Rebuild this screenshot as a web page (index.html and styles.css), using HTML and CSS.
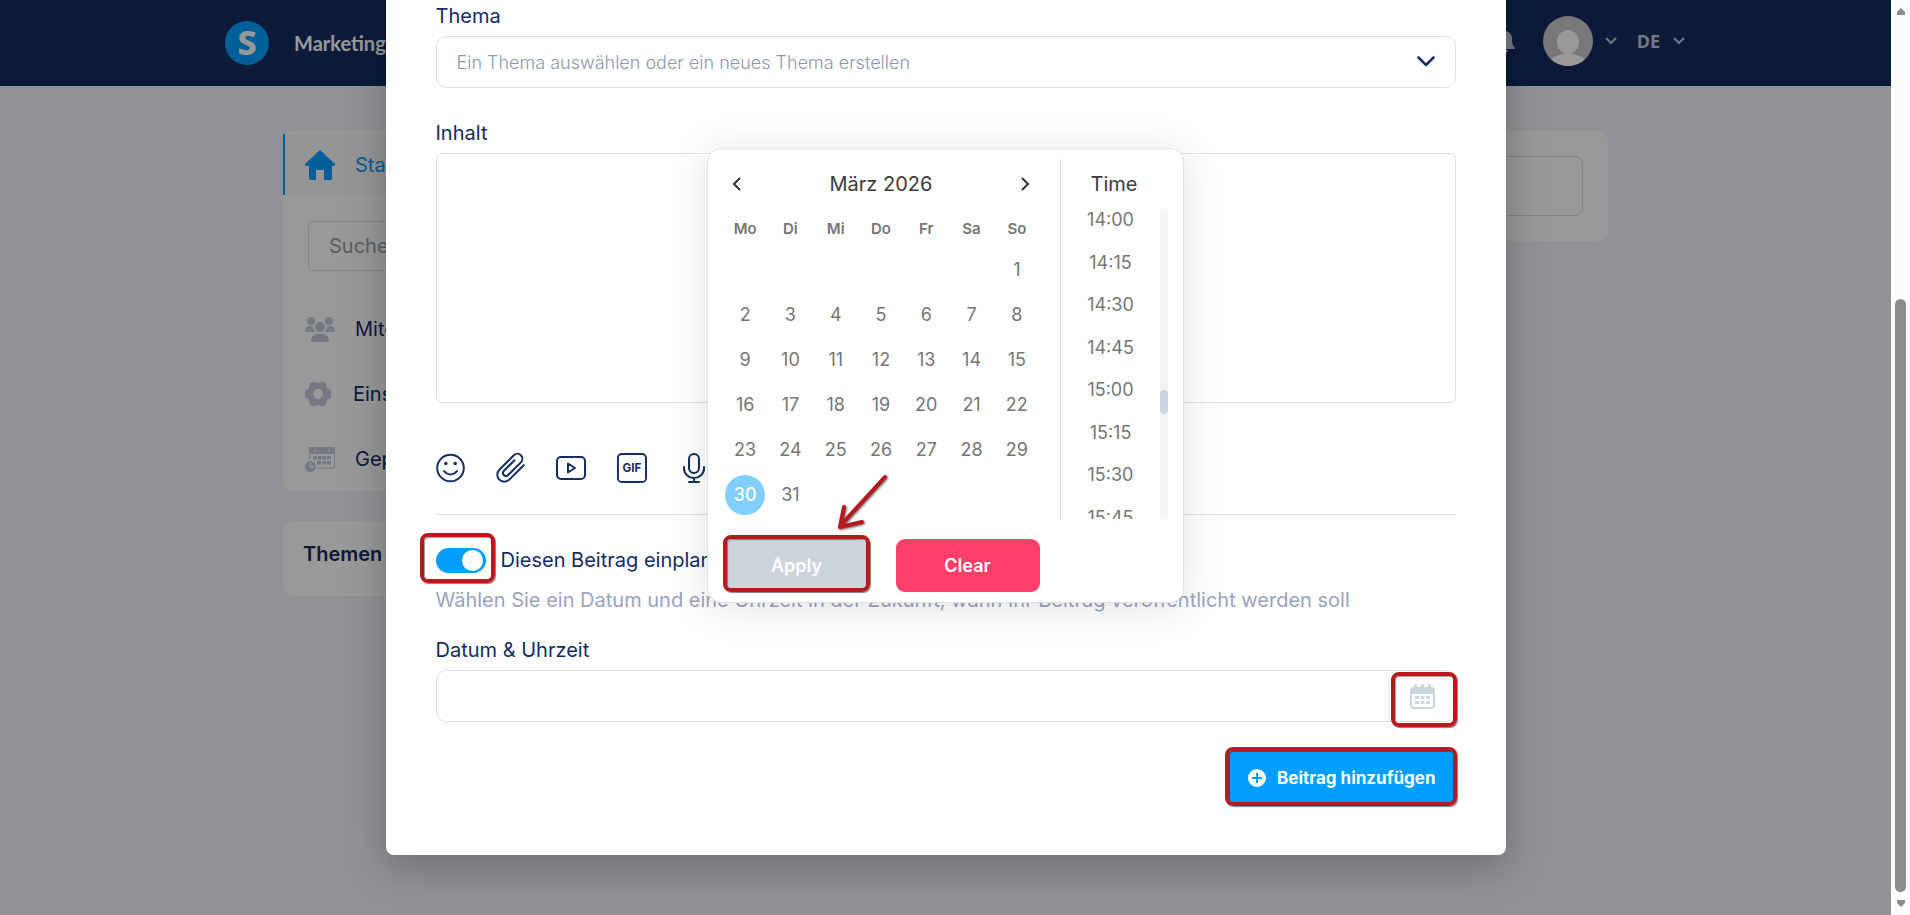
FILE: index.html
```html
<!DOCTYPE html>
<html lang="de">
<head>
  <meta charset="UTF-8" />
  <meta name="viewport" content="width=device-width, initial-scale=1" />
  <title>Beitrag erstellen</title>
  <link rel="stylesheet" href="styles.css">
</head>
<body>

<div class="page">
  <header class="header">
    <div class="logo">S</div>
    <nav class="nav"><a href="#">Marketing</a></nav>
    <div class="header-right">
      <svg class="bell" viewBox="0 0 24 26"><path d="M12 1a2 2 0 0 0-2 2C6 4 4 7 4 11c0 5-1 7-3 9v1h22v-1c-2-2-3-4-3-9 0-4-2-7-6-8a2 2 0 0 0-2-2zM8 22a4 3 0 0 0 8 0z"/></svg>
      <svg class="avatar" viewBox="0 0 50 50">
        <clipPath id="circle"><circle cx="25" cy="25" r="25"/></clipPath>
        <g clip-path="url(#circle)">
          <rect width="50" height="50" fill="#c9c9c9"/>
          <path d="M25 14c-7 0-11 6-11 12 0 5 3 9 7 11v1C14 39 9 41 7 46l4 6h28l4-6c-2-5-7-7-14-8v-1c4-2 7-6 7-11 0-6-4-12-11-12z" fill="#fff"/>
        </g>
      </svg>
      <svg class="caret" viewBox="0 0 12 8"><path d="M1 1l5 5 5-5"/></svg>
      <span class="lang">DE</span>
      <svg class="caret" viewBox="0 0 12 8"><path d="M1 1l5 5 5-5"/></svg>
    </div>
  </header>

  <main class="container">
    <aside class="sidebar">
      <div class="card menu">
        <a class="menu-item active" href="#">
          <svg viewBox="0 0 30 30"><path d="M15 0L29.500 13.500c1 1 .3 2.500-1 2.500H27v12a2 2 0 0 1-2 2h-6v-9a1 1 0 0 0-1-1h-6a1 1 0 0 0-1 1v9H6a2 2 0 0 1-2-2V16H1.500C.2 16-.5 14.500.5 13.500z"/></svg>
          <span>Startseite</span>
        </a>
        <input class="search" type="text" placeholder="Suche" aria-label="Suche">
        <a class="menu-item" href="#">
          <svg viewBox="0 0 30 30"><circle cx="6" cy="7" r="4"/><circle cx="24" cy="7" r="4"/><circle cx="15" cy="13" r="5"/><path d="M0 18c0-4 2-6 5-6h3c0 3 1 5 2 6zM30 18c0-4-2-6-5-6h-3c0 3-1 5-2 6zM6 28c0-5 3-8 6-8h6c3 0 6 3 6 8z"/></svg>
          <span>Mitglieder</span>
        </a>
        <a class="menu-item settings" href="#">
          <svg viewBox="0 0 28 30"><path fill-rule="evenodd" d="M9 2.500c1 0 2.500 1.500 4 1.500s3-1.500 4-1.500l4 2c1 1 0 3 1 4.500s3.500 1.500 4 3v6c-.5 1.500-3 1.500-4 3s0 3.500-1 4.500l-4 2c-1 0-2.500-1.500-4-1.500s-3 1.500-4 1.500l-4-2c-1-1 0-3-1-4.500s-3.500-1.500-4-3v-6c.5-1.500 3-1.500 4-3s0-3.500 1-4.500zM13 10a5 5 0 1 0 0 10 5 5 0 0 0 0-10z"/></svg>
          <span>Einstellungen</span>
        </a>
        <a class="menu-item" href="#">
          <svg viewBox="0 0 30 30"><path fill-rule="evenodd" d="M4 3h26v7H4zM10 5.500a1 1 0 1 0 0 2 1 1 0 0 0 0-2zM24 5.500a1 1 0 1 0 0 2 1 1 0 0 0 0-2z"/><path d="M4.500 10v5M29.500 10v14H12" fill="none" stroke="#c1c8da"/><path d="M8 12h4v3.500H8zM13 12h3.500v3.500H13zM17.500 12H21v3.500h-3.500zM22 12h4v3.500h-4zM12 17h4v3.500h-4zM17.500 17H21v3.500h-3.500zM22 17h4v3.500h-4z"/><circle cx="5.500" cy="22.500" r="5.500"/><path d="M5.500 19v4h3" fill="none" stroke="#fff" stroke-width="1.500"/></svg>
          <span>Geplante Beiträge</span>
        </a>
      </div>
      <div class="card topics">Themen</div>
    </aside>
    <section class="card feed">
      <input class="feed-input" type="text" aria-label="Neuer Beitrag">
    </section>
  </main>

  <div class="overlay">
    <form class="modal" autocomplete="off">
      <label for="thema">Thema</label>
      <div class="field">
        <select id="thema">
          <option>Ein Thema auswählen oder ein neues Thema erstellen</option>
        </select>
        <svg class="select-arrow" viewBox="0 0 18 12"><path d="M1.500 1.500L9 9l7.500-7.500"/></svg>
      </div>

      <label for="inhalt">Inhalt</label>
      <textarea id="inhalt"></textarea>

      <div class="toolbar">
        <button type="button" aria-label="Emoji"><svg viewBox="0 0 30 30"><circle cx="14.500" cy="15" r="13.300"/><circle class="dot" cx="9.800" cy="10.500" r="1.800"/><circle class="dot" cx="19.200" cy="10.500" r="1.800"/><path d="M8 18c3.500 4.500 9.500 4.500 13 0"/></svg></button>
        <button type="button" aria-label="Anhang"><svg viewBox="0 0 30 30"><path transform="rotate(45 15 15)" d="M22 4v20.500a7 7 0 0 1-14 0V4a5 5 0 0 1 10 0v18a3 3 0 0 1-6 0V7"/></svg></button>
        <button type="button" aria-label="Video"><svg viewBox="0 0 30 30"><rect x="1" y="4" width="28" height="22" rx="4"/><path d="M12 10.500v9l7-4.500z"/></svg></button>
        <button type="button" aria-label="GIF"><svg viewBox="-1 0 31 31"><rect x="1" y="1" width="29" height="29" rx="4"/><text x="15.500" y="20">GIF</text></svg></button>
        <button type="button" aria-label="Sprachnachricht"><svg viewBox="-4 0 30 30"><rect x="9" y="1" width="10" height="19" rx="5"/><path d="M4 14v1.500a10 9.500 0 0 0 20 0V14M14 25v4M9 29h10"/></svg></button>
      </div>

      <div class="schedule">
        <span class="marked mark-toggle"><input class="toggle" type="checkbox" id="einplanen" checked></span>
        <label for="einplanen">Diesen Beitrag einplanen</label>
      </div>
      <p class="hint">Wählen Sie ein Datum und eine Uhrzeit in der Zukunft, wann Ihr Beitrag veröffentlicht werden soll</p>

      <label for="datum">Datum &amp; Uhrzeit</label>
      <div class="field date-field">
        <input type="text" id="datum">
        <button type="button" class="marked mark-date" aria-label="Kalender öffnen">
          <svg viewBox="0 0 25 25"><path d="M4 1.500a1.500 1.500 0 0 1 3 0V3h4V1.500a1.500 1.500 0 0 1 3 0V3h4V1.500a1.500 1.500 0 0 1 3 0V3a4 4 0 0 1 4 4v14a4 4 0 0 1-4 4H4a4 4 0 0 1-4-4V7a4 4 0 0 1 4-4zM2 10v11a2 2 0 0 0 2 2h17a2 2 0 0 0 2-2V10z" fill-rule="evenodd"/><path d="M5 12h4v3H5zM10.500 12h4v3h-4zM16 12h4v3h-4zM5 17h4v3H5zM10.500 17h4v3h-4zM16 17h4v3h-4z"/></svg>
        </button>
      </div>

      <div class="actions">
        <button type="submit" class="btn-submit marked mark-submit">
          <svg viewBox="0 0 20 20"><circle cx="10" cy="10" r="10" fill="#fff"/><path d="M10 5v10M5 10h10"/></svg>
          Beitrag hinzufügen
        </button>
      </div>

      <div class="picker">
        <div class="picker-main">
          <div class="calendar">
            <div class="month">
              <button type="button" aria-label="Vorheriger Monat"><svg viewBox="0 0 10 16"><path d="M8 2L2 8l6 6"/></svg></button>
              <span>März 2026</span>
              <button type="button" aria-label="Nächster Monat"><svg viewBox="0 0 10 16"><path d="M2 2l6 6-6 6"/></svg></button>
            </div>
            <table>
              <thead>
                <tr><th>Mo</th><th>Di</th><th>Mi</th><th>Do</th><th>Fr</th><th>Sa</th><th>So</th></tr>
              </thead>
              <tbody>
                <tr><td></td><td></td><td></td><td></td><td></td><td></td><td>1</td></tr>
                <tr><td>2</td><td>3</td><td>4</td><td>5</td><td>6</td><td>7</td><td>8</td></tr>
                <tr><td>9</td><td>10</td><td>11</td><td>12</td><td>13</td><td>14</td><td>15</td></tr>
                <tr><td>16</td><td>17</td><td>18</td><td>19</td><td>20</td><td>21</td><td>22</td></tr>
                <tr><td>23</td><td>24</td><td>25</td><td>26</td><td>27</td><td>28</td><td>29</td></tr>
                <tr><td><span class="selected">30</span></td><td>31</td><td></td><td></td><td></td><td></td><td></td></tr>
              </tbody>
            </table>
          </div>
          <div class="time">
            <div class="time-title">Time</div>
            <div class="time-body">
              <ul>
                <li>14:00</li><li>14:15</li><li>14:30</li><li>14:45</li>
                <li>15:00</li><li>15:15</li><li>15:30</li><li>15:45</li>
              </ul>
              <div class="time-track"><div class="time-thumb"></div></div>
            </div>
          </div>
        </div>
        <div class="picker-buttons">
          <button type="button" class="btn-apply marked mark-apply">Apply</button>
          <button type="button" class="btn-clear">Clear</button>
        </div>
        <svg class="arrow" viewBox="0 0 56 60"><path d="M51 6L6 55M10 36L6 56l22-5"/></svg>
      </div>
    </form>
  </div>
</div>

<div class="scrollbar">
  <svg viewBox="0 0 10 7"><path d="M5 0l4 4v3H1V4z"/></svg>
  <div class="scroll-thumb"></div>
  <svg viewBox="0 0 10 7"><path d="M1 0h8v3L5 7 1 3z"/></svg>
</div>

</body>
</html>
```
FILE: styles.css
```css
* {
  box-sizing: border-box;
}
body {
  margin: 0;
  display: flex;
  min-height: 100vh;
  font-family: Inter, sans-serif;
  font-size: 20px;
  line-height: 24px;
  color: #142c62;
}
button, input, select, textarea {
  font-family: inherit;
  margin: 0;
}
button {
  border: none;
  background: none;
  padding: 0;
  cursor: pointer;
}
a {
  color: inherit;
  text-decoration: none;
}
svg {
  display: block;
  flex: none;
}
.page {
  position: relative;
  flex: 1;
  min-width: 0;
  background: #f2f4f9;
  overflow: hidden;
}

/* Header */
.header {
  display: flex;
  align-items: center;
  height: 86px;
  padding: 0 206px 0 225px;
  background: #142c62;
  color: #fff;
}
.logo {
  width: 44px;
  height: 44px;
  border-radius: 50%;
  background: #009eff;
  font-family: "Noto Sans", sans-serif;
  font-size: 34px;
  font-weight: 800;
  line-height: 42px;
  text-align: center;
}
.nav {
  margin-left: 25px;
  font-family: Lato, sans-serif;
  font-weight: bold;
}
.header-right {
  display: flex;
  align-items: center;
  margin-left: auto;
  padding-bottom: 4px;
}
.bell {
  width: 24px;
  height: 26px;
  margin-right: 27px;
  fill: #c1c8da;
}
.avatar {
  width: 50px;
  height: 50px;
  margin-right: 12px;
}
.caret {
  width: 12px;
  height: 8px;
  fill: none;
  stroke: #c1c8da;
  stroke-width: 2;
}
.lang {
  margin: 0 13px 0 20px;
  font-family: "Noto Sans", sans-serif;
  font-size: 18px;
  font-weight: 700;
  color: #c1c8da;
}

/* Inhalt hinter dem Dialog */
.container {
  display: flex;
  justify-content: space-between;
  align-items: flex-start;
  max-width: 1325px;
  margin: 45px auto 0;
}
.card {
  background: #fff;
  border-radius: 10px;
}
.sidebar {
  width: 320px;
}
.menu {
  padding-top: 3px;
}
.menu-item {
  display: flex;
  align-items: center;
  gap: 20px;
  height: 65px;
  padding-left: 22px;
}
.menu-item svg {
  width: 30px;
  height: 30px;
  fill: #c1c8da;
}
.menu-item.active {
  height: 61px;
  padding-left: 20px;
  border-left: 2px solid #009eff;
  background: #f8f9fb;
  color: #009eff;
}
.menu-item.active svg {
  fill: #009eff;
}
.menu-item.settings svg {
  width: 28px;
}
.search {
  display: block;
  width: 270px;
  height: 50px;
  margin: 26px 25px 25px;
  padding: 0 20px;
  border: 1px solid #dcdcdc;
  border-radius: 6px;
  font-size: 20px;
}
.search::placeholder {
  color: #999;
}
.topics {
  margin-top: 30px;
  padding: 21px 20px 30px;
  font-weight: 600;
}
.feed {
  width: 975px;
  padding: 25px;
}
.feed-input {
  display: block;
  width: 100%;
  height: 60px;
  border: 1px solid #dcdcdc;
  border-radius: 8px;
}

/* Dialog */
.overlay {
  position: absolute;
  inset: 0;
  background: rgba(0, 0, 0, 0.4);
}
.modal {
  position: relative;
  max-width: 1120px;
  margin: 0 auto;
  padding: 4px 50px 52px;
  background: #fff;
  border-radius: 0 0 8px 8px;
  box-shadow: 0 12px 40px rgba(0, 0, 0, 0.25);
}
.modal > label {
  display: block;
  margin-bottom: 8px;
}
.field {
  position: relative;
  margin-bottom: 33px;
}
select, textarea, .date-field input {
  display: block;
  width: 100%;
  height: 52px;
  border: 1px solid #dfe0e4;
  border-radius: 10px;
  background: #fff;
}
select {
  appearance: none;
  padding: 0 20px;
  font-size: 18px;
  font-weight: 300;
  color: #8e98aa;
}
.select-arrow {
  position: absolute;
  right: 21px;
  top: 20px;
  width: 18px;
  height: 12px;
  fill: none;
  stroke: #142c62;
  stroke-width: 2.5;
  stroke-linecap: round;
  stroke-linejoin: round;
  pointer-events: none;
}
textarea {
  height: 250px;
  border-radius: 6px;
  resize: none;
}
.toolbar {
  display: flex;
  gap: 30px;
  margin-top: 50px;
  padding-bottom: 31px;
  border-bottom: 1px solid #dfe0e4;
}
.toolbar svg {
  width: 30px;
  height: 30px;
  overflow: visible;
  fill: none;
  stroke: #142c62;
  stroke-width: 2;
  stroke-linecap: round;
  stroke-linejoin: round;
}
.toolbar .dot {
  fill: #142c62;
  stroke: none;
}
.toolbar text {
  fill: #142c62;
  stroke: none;
  font-size: 12px;
  font-weight: 700;
  text-anchor: middle;
}
.schedule {
  display: flex;
  align-items: flex-start;
  gap: 15px;
  margin-top: 33px;
}
.toggle {
  appearance: none;
  display: block;
  width: 50px;
  height: 25px;
  padding: 2px 3px;
  border-radius: 13px;
  background: #009eff;
}
.toggle::before {
  content: "";
  display: block;
  width: 21px;
  height: 21px;
  margin-left: auto;
  border-radius: 50%;
  background: #fff;
}
.hint {
  margin: 15px 0 26px;
  color: #9aa3bd;
}
.date-field {
  margin-bottom: 28px;
}
.date-field button {
  position: absolute;
  right: 0;
  top: 0;
  width: 62px;
  height: 52px;
  padding-left: 16px;
}
.date-field svg {
  width: 25px;
  height: 25px;
  fill: #cbd5e1;
}
.actions {
  display: flex;
  justify-content: flex-end;
}
.btn-submit {
  display: flex;
  align-items: center;
  gap: 10px;
  height: 53px;
  padding: 3px 20px 0;
  border-radius: 8px;
  background: #009eff;
  color: #fff;
  font-size: 17px;
  font-weight: 700;
}
.btn-submit svg {
  width: 20px;
  height: 20px;
  fill: none;
  stroke: #009eff;
  stroke-width: 2;
}

/* Rote Markierungen */
.marked {
  position: relative;
}
.marked::after {
  content: "";
  position: absolute;
  inset: -3px -1px -3px -2px;
  border: 4px solid #b71a1c;
  border-radius: 8px;
  box-shadow: 1px 1px 1px rgba(0, 0, 0, 0.5), inset 1px 1px 1px rgba(0, 0, 0, 0.4);
  pointer-events: none;
}
.mark-toggle::after {
  inset: -15px -9px -10px -16px;
}
.date-field .marked {
  position: absolute;
}
.mark-date::after {
  inset: 2px -1px -5px -3px;
}
.mark-apply::after {
  inset: -4px -1px 0 -2px;
}

/* Datumsauswahl */
.picker {
  position: absolute;
  left: 321px;
  top: 148px;
  width: 477px;
  padding: 10px 15px;
  border: 1px solid #dfe0e4;
  border-radius: 14px;
  background: #fff;
  box-shadow: 0 4px 40px rgba(0, 0, 0, 0.12);
  color: #757575;
}
.picker-main {
  display: flex;
  height: 360px;
}
.calendar {
  width: 338px;
  padding-right: 20px;
  border-right: 1px solid #dfe0e4;
}
.month {
  display: flex;
  justify-content: space-between;
  align-items: center;
  height: 50px;
  padding: 0 9px;
  color: #3c3c3c;
}
.month svg {
  width: 10px;
  height: 16px;
  fill: none;
  stroke: #333;
  stroke-width: 2;
}
table {
  width: 100%;
  table-layout: fixed;
  border-collapse: collapse;
  font-size: 18px;
  text-align: center;
}
th {
  height: 38px;
  padding: 2px 0 0;
  font-size: 15px;
  font-weight: 600;
}
td {
  height: 45px;
  padding: 0;
}
.selected {
  display: block;
  width: 40px;
  margin: 0 auto;
  border-radius: 50%;
  background: #80cfff;
  color: #fff;
  font-weight: 500;
  line-height: 40px;
}
.time {
  display: flex;
  flex-direction: column;
  flex: 1;
}
.time-title {
  height: 50px;
  line-height: 50px;
  text-align: center;
  color: #3c3c3c;
}
.time-body {
  display: flex;
  justify-content: flex-end;
  height: 310px;
  overflow: hidden;
}
.time-body ul {
  display: flex;
  flex-direction: column;
  flex: none;
  width: 98px;
  height: 340px;
  margin: -10px 0 0;
  padding: 0;
  list-style: none;
  font-size: 18px;
  text-align: center;
}
.time-body li {
  flex: 1;
  line-height: 42px;
}
.time-track {
  width: 8px;
  padding-top: 181px;
  border-radius: 4px;
  background: #f3f3f5;
}
.time-thumb {
  height: 24px;
  border-radius: 4px;
  background: #cbd5e1;
}
.picker-buttons {
  display: flex;
  gap: 27px;
  margin-top: 20px;
  padding-left: 2px;
}
.picker-buttons button {
  width: 144px;
  height: 53px;
  border-radius: 9px;
  color: #fff;
  font-size: 18px;
  font-weight: 600;
}
.btn-apply {
  background: #cdd3da;
}
.btn-clear {
  background: #ff3e6a;
}
.arrow {
  position: absolute;
  left: 126px;
  top: 322px;
  width: 56px;
  height: 60px;
  fill: none;
  stroke: #b71a1c;
  stroke-width: 4;
  stroke-linecap: round;
  stroke-linejoin: round;
  filter: drop-shadow(1px 1px 1px rgba(0, 0, 0, 0.6));
}

/* Bildlaufleiste */
.scrollbar {
  display: flex;
  flex-direction: column;
  align-items: center;
  width: 19px;
  padding: 8px 0;
  background: #fcfcfc;
}
.scrollbar svg {
  width: 10px;
  height: 7px;
  fill: #8b8b8b;
}
.scroll-thumb {
  width: 11px;
  height: 66%;
  margin: auto 0 8px;
  border-radius: 6px;
  background: #8b8b8b;
}
```
